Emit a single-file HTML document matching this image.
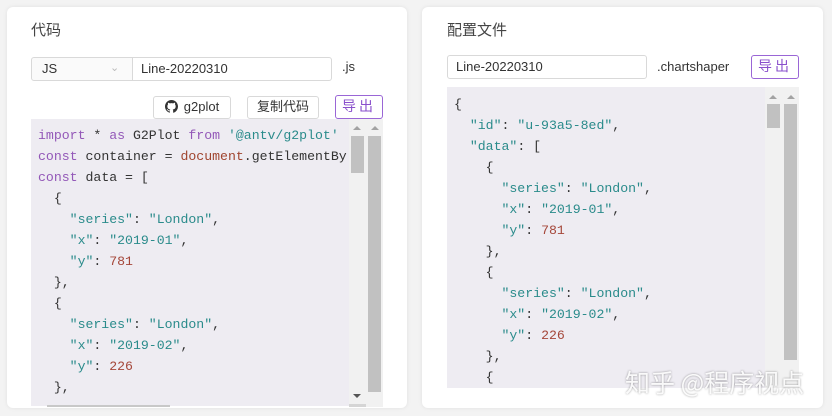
<!DOCTYPE html>
<html><head><meta charset="utf-8"><style>
*{box-sizing:border-box;margin:0;padding:0}
body{width:832px;height:416px;background:#f3f3f3;position:relative;overflow:hidden;font-family:"Liberation Sans","Noto Sans CJK SC",sans-serif;color:#333}
.a{position:absolute}
.card{background:#fff;border-radius:6px;box-shadow:0 0 4px rgba(0,0,0,.08)}
.title{font-size:15px;color:#444}
.box{border:1px solid #d9d9d9;border-radius:3px;background:#fff;font-size:13px;color:#333;line-height:21px;padding-left:8px}
.btn{border:1px solid #d9d9d9;border-radius:3px;background:#fff;font-size:13px;text-align:center;line-height:20px}
.exp{border:1px solid #9a66d6;color:#8a50cc;border-radius:3px;background:#fff;font-size:14px;text-align:center;line-height:20px;letter-spacing:3px}
.code{background:#eeecf2;overflow:hidden;font-family:"Liberation Mono","DejaVu Sans Mono",monospace;font-size:13.2px;line-height:21px;color:#333;white-space:pre}
.k{color:#9358b8}.s{color:#2a8b8b}.n{color:#a5473a}.d{color:#a0452f}
.trk{background:#f1f1f1}
.th{background:#c1c1c1}
.up{width:0;height:0;border-left:4px solid transparent;border-right:4px solid transparent;border-bottom:4px solid #a3a3a3}
</style></head><body>
<div class="a card" style="left:7px;top:7px;width:400px;height:401px"></div>
<div class="a card" style="left:422px;top:7px;width:401px;height:401px"></div>

<div class="a title" style="left:31px;top:19px">代码</div>
<div class="a box" style="left:31px;top:57px;width:102px;height:24px;border-radius:3px 0 0 3px;background:#fafafa;padding-left:10px">JS<span style="position:absolute;left:78px;top:0;color:#bbb;font-size:11px">&#8964;</span></div>
<div class="a box" style="left:132px;top:57px;width:200px;height:24px;border-radius:0 3px 3px 0">Line-20220310</div>
<div class="a" style="left:342px;top:59px;font-size:13px">.js</div>

<div class="a btn" style="left:153px;top:96px;width:78px;height:23px"><svg width="13" height="13" viewBox="0 0 16 16" style="vertical-align:-2px;margin-right:6px"><path fill="#333" d="M8 0C3.58 0 0 3.58 0 8c0 3.540 2.290 6.530 5.470 7.590.4.07.55-.17.55-.38v-1.330c-2.230.48-2.700-1.070-2.700-1.070-.36-.92-.89-1.170-.89-1.170-.73-.5.06-.49.06-.49.8.06 1.230.83 1.230.83.71 1.220 1.870.87 2.330.66.07-.52.28-.87.51-1.070-1.780-.2-3.640-.89-3.640-3.950 0-.87.31-1.590.82-2.150-.08-.2-.36-1.020.08-2.120 0 0 .67-.21 2.200.82a7.600 7.600 0 014 0c1.530-1.040 2.200-.82 2.200-.82.44 1.100.16 1.920.08 2.120.51.56.82 1.270.82 2.150 0 3.070-1.870 3.750-3.650 3.950.29.25.54.73.54 1.480v2.200c0 .21.15.46.55.38A8 8 0 0016 8c0-4.420-3.580-8-8-8z"/></svg>g2plot</div>
<div class="a btn" style="left:247px;top:96px;width:72px;height:23px">复制代码</div>
<div class="a exp" style="left:335px;top:95px;width:48px;height:24px">导出</div>

<div class="a code" style="left:31px;top:119px;width:352px;height:287px;padding:6px 0 0 7px"><span class="k">import</span> * <span class="k">as</span> G2Plot <span class="k">from</span> <span class="s">'@antv/g2plot'</span>
<span class="k">const</span> container = <span class="d">document</span>.getElementBy
<span class="k">const</span> data = [
  {
    <span class="s">"series"</span>: <span class="s">"London"</span>,
    <span class="s">"x"</span>: <span class="s">"2019-01"</span>,
    <span class="s">"y"</span>: <span class="n">781</span>
  },
  {
    <span class="s">"series"</span>: <span class="s">"London"</span>,
    <span class="s">"x"</span>: <span class="s">"2019-02"</span>,
    <span class="s">"y"</span>: <span class="n">226</span>
  },</div>
<div class="a trk" style="left:349px;top:119px;width:34px;height:288px"></div>
<div class="a up" style="left:353px;top:126px"></div>
<div class="a up" style="left:371px;top:126px"></div>
<div class="a th" style="left:351px;top:136px;width:13px;height:37px"></div>
<div class="a th" style="left:368px;top:136px;width:13px;height:256px"></div>
<div class="a" style="left:353px;top:394px;width:0;height:0;border-left:4px solid transparent;border-right:4px solid transparent;border-top:4px solid #555"></div>
<div class="a" style="left:349px;top:404px;width:17px;height:3px;background:#d5d5d5"></div>
<div class="a" style="left:47px;top:405px;width:123px;height:2px;background:#c8c8c8"></div>

<div class="a title" style="left:447px;top:19px">配置文件</div>
<div class="a box" style="left:447px;top:55px;width:200px;height:24px">Line-20220310</div>
<div class="a" style="left:657px;top:59px;font-size:13px">.chartshaper</div>
<div class="a exp" style="left:751px;top:55px;width:48px;height:24px">导出</div>

<div class="a code" style="left:447px;top:87px;width:352px;height:301px;padding:7px 0 0 7px">{
  <span class="s">"id"</span>: <span class="s">"u-93a5-8ed"</span>,
  <span class="s">"data"</span>: [
    {
      <span class="s">"series"</span>: <span class="s">"London"</span>,
      <span class="s">"x"</span>: <span class="s">"2019-01"</span>,
      <span class="s">"y"</span>: <span class="n">781</span>
    },
    {
      <span class="s">"series"</span>: <span class="s">"London"</span>,
      <span class="s">"x"</span>: <span class="s">"2019-02"</span>,
      <span class="s">"y"</span>: <span class="n">226</span>
    },
    {</div>
<div class="a trk" style="left:765px;top:87px;width:34px;height:301px"></div>
<div class="a up" style="left:769px;top:95px"></div>
<div class="a up" style="left:787px;top:95px"></div>
<div class="a th" style="left:767px;top:104px;width:13px;height:24px"></div>
<div class="a th" style="left:784px;top:104px;width:13px;height:256px"></div>

<div class="a" style="left:625px;top:364px;font-size:25px;color:rgba(255,255,255,.92);text-shadow:0 0 2px rgba(0,0,0,.4);font-family:'Noto Sans CJK SC',sans-serif;white-space:nowrap">知乎 @程序视点</div>
</body></html>
